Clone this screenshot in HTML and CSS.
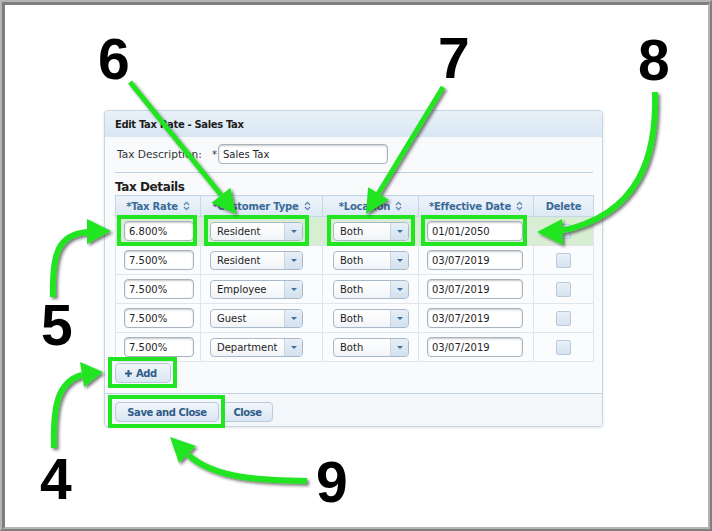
FILE: index.html
```html
<!DOCTYPE html>
<html>
<head>
<meta charset="utf-8">
<title>Edit Tax Rate</title>
<link rel="stylesheet" href="styles.css">
</head>
<body>
<div class="frame">
  <div class="canvas">
    <div class="dialog">
      <div class="dlg-head">Edit Tax Rate - Sales Tax</div>
      <div class="dlg-body">
        <div class="desc-row">
          <span class="label">Tax Description:</span><span class="req">*</span>
          <div class="input desc-input">Sales Tax</div>
        </div>
        <div class="rule"></div>
        <div class="section-title">Tax Details</div>
        <table class="grid">
          <colgroup><col class="w-rate"><col class="w-type"><col class="w-loc"><col class="w-date"><col class="w-del"></colgroup>
          <thead>
            <tr>
              <th>*Tax Rate<svg class="sort" width="7" height="10" viewBox="0 0 7 10"><path d="M1 4 L3.5 1.3 L6 4 M1 6 L3.5 8.7 L6 6"/></svg></th>
              <th>*Customer Type<svg class="sort" width="7" height="10" viewBox="0 0 7 10"><path d="M1 4 L3.5 1.3 L6 4 M1 6 L3.5 8.7 L6 6"/></svg></th>
              <th>*Location<svg class="sort" width="7" height="10" viewBox="0 0 7 10"><path d="M1 4 L3.5 1.3 L6 4 M1 6 L3.5 8.7 L6 6"/></svg></th>
              <th>*Effective Date<svg class="sort" width="7" height="10" viewBox="0 0 7 10"><path d="M1 4 L3.5 1.3 L6 4 M1 6 L3.5 8.7 L6 6"/></svg></th>
              <th>Delete</th>
            </tr>
          </thead>
          <tbody>
            <tr class="sel">
              <td><div class="input rate">6.800%</div></td>
              <td><div class="select type"><span class="val">Resident</span><span class="drop"></span></div></td>
              <td><div class="select loc"><span class="val">Both</span><span class="drop"></span></div></td>
              <td><div class="input date">01/01/2050</div></td>
              <td><div class="chk"></div></td>
            </tr>
            <tr>
              <td><div class="input rate">7.500%</div></td>
              <td><div class="select type"><span class="val">Resident</span><span class="drop"></span></div></td>
              <td><div class="select loc"><span class="val">Both</span><span class="drop"></span></div></td>
              <td><div class="input date">03/07/2019</div></td>
              <td><div class="chk"></div></td>
            </tr>
            <tr>
              <td><div class="input rate">7.500%</div></td>
              <td><div class="select type"><span class="val">Employee</span><span class="drop"></span></div></td>
              <td><div class="select loc"><span class="val">Both</span><span class="drop"></span></div></td>
              <td><div class="input date">03/07/2019</div></td>
              <td><div class="chk"></div></td>
            </tr>
            <tr>
              <td><div class="input rate">7.500%</div></td>
              <td><div class="select type"><span class="val">Guest</span><span class="drop"></span></div></td>
              <td><div class="select loc"><span class="val">Both</span><span class="drop"></span></div></td>
              <td><div class="input date">03/07/2019</div></td>
              <td><div class="chk"></div></td>
            </tr>
            <tr>
              <td><div class="input rate">7.500%</div></td>
              <td><div class="select type"><span class="val">Department</span><span class="drop"></span></div></td>
              <td><div class="select loc"><span class="val">Both</span><span class="drop"></span></div></td>
              <td><div class="input date">03/07/2019</div></td>
              <td><div class="chk"></div></td>
            </tr>
          </tbody>
        </table>
        <div class="add-row">
          <div class="button add"><svg class="plus" width="7" height="7" viewBox="0 0 7 7"><path d="M3.5 0 V7 M0 3.5 H7"/></svg>Add</div>
        </div>
      </div>
      <div class="dlg-foot">
        <div class="button save">Save and Close</div>
        <div class="button close">Close</div>
      </div>
    </div>
  </div>

  <svg class="overlay" width="712" height="531" viewBox="0 0 712 531">
    <defs>
      <filter id="sh" x="-30%" y="-30%" width="160%" height="160%">
        <feDropShadow dx="2" dy="2" stdDeviation="1.6" flood-color="#1a1a1a" flood-opacity="0.6"/>
      </filter>
    </defs>
    <g class="boxes">
      <rect x="119" y="217" width="76" height="27"/>
      <rect x="206" y="217" width="101" height="27"/>
      <rect x="329" y="217" width="84" height="27"/>
      <rect x="423" y="217" width="102" height="27"/>
      <rect x="110" y="359" width="65" height="27"/>
      <rect x="110" y="397" width="113" height="29"/>
    </g>
    <g class="arrows" filter="url(#sh)">
      <path class="shaft" d="M130 82 L221 195"/>
      <polygon points="236,214 211.6,202.8 230.4,187.8"/>
      <path class="shaft" d="M443 87 L378 194"/>
      <polygon points="366,214 368.1,187.3 388.7,199.7"/>
      <path class="shaft thick" d="M655 92 C657 155 640 215 560 231"/>
      <polygon points="537,232 562,219 563,245"/>
      <path class="shaft thick" d="M53 297 C52 255 57 234 88 232"/>
      <polygon points="111,231 87,219 87,244"/>
      <path class="shaft thick" d="M54 448 C53 410 56 382 82 375"/>
      <polygon points="103,372 80,362 84,387"/>
      <path class="shaft thick" d="M307 481 C255 480 215 478 188 455"/>
      <polygon points="170,437 196,446 179,463"/>
    </g>
    <g class="nums">
      <text x="98" y="79">6</text>
      <text x="438" y="78">7</text>
      <text x="638" y="80">8</text>
      <text x="41" y="345">5</text>
      <text x="40" y="499">4</text>
      <text x="316" y="502">9</text>
    </g>
  </svg>
</div>
</body>
</html>
```

FILE: styles.css
```css
* { box-sizing: border-box; }

body {
  margin: 0;
  background: #fff;
  font-family: "DejaVu Sans", sans-serif;
  font-size: 10px;
  color: #222;
}

.frame {
  position: relative;
  width: 712px;
  height: 531px;
  border-style: solid;
  border-width: 2px;
  border-color: #b4b4b4 #7e7e7e #7e7e7e #b4b4b4;
  overflow: hidden;
}

.canvas {
  height: 100%;
  border-style: solid;
  border-width: 3px 2px 2px 3px;
  border-color: #7e7e7e #b4b4b4 #b4b4b4 #7e7e7e;
  background: #fff;
  padding: 105px 0 0 99px;
}

/* dialog */
.dialog {
  width: 499px;
  height: 317px;
  border: 1px solid #c8d6e4;
  border-radius: 4px;
  background: #f8fafc;
  display: flex;
  flex-direction: column;
  box-shadow: 0 1px 3px rgba(0, 0, 0, 0.12);
}

.dlg-head {
  flex: none;
  height: 26px;
  padding: 0 10px;
  display: flex;
  align-items: center;
  background: linear-gradient(#e9f1f9, #d9e7f3);
  border-radius: 3px 3px 0 0;
  font-weight: bold;
  letter-spacing: -0.35px;
  color: #1e1e1e;
}

.dlg-body {
  flex: 1;
  padding: 7px 9px 0 10px;
}

.desc-row {
  display: flex;
  align-items: center;
  height: 20px;
  padding-left: 2px;
}

.label { width: 95px; font-size: 10.6px; color: #333; }
.req { width: 6px; color: #333; }

.input {
  height: 20px;
  border: 1px solid #a9b3bd;
  border-radius: 4px;
  background: #fff;
  box-shadow: inset 0 1px 2px rgba(0, 0, 0, 0.22);
  padding: 0 4px;
  display: flex;
  align-items: center;
  color: #1e1e1e;
}

.desc-input { width: 170px; }

.rule {
  margin-top: 8px;
  border-top: 1px solid #bed0e2;
}

.section-title {
  margin-top: 6px;
  font-size: 12px;
  line-height: 16px;
  font-weight: bold;
  letter-spacing: -0.4px;
  color: #1e1e1e;
}

/* grid */
.grid {
  border-collapse: collapse;
  table-layout: fixed;
  width: 478px;
}

.w-rate { width: 85px; }
.w-type { width: 122px; }
.w-loc { width: 96px; }
.w-date { width: 115px; }
.w-del { width: 60px; }

.grid th {
  height: 21px;
  padding: 0;
  background: linear-gradient(#eef4fa, #dce8f4);
  border: 1px solid #c5d6e7;
  color: #3a6a97;
  font-size: 10px;
  font-weight: bold;
  letter-spacing: -0.2px;
  text-align: center;
  white-space: nowrap;
}

.sort {
  margin-left: 5px;
  vertical-align: -1px;
}
.sort path {
  fill: none;
  stroke: #5a83ab;
  stroke-width: 1.2;
}

.grid td {
  height: 29px;
  padding: 0 0 0 8px;
  border: 1px solid #dfe5eb;
  background: #fbfcfd;
}

.grid tr.sel td { background: #d8eed3; }

.grid td:nth-child(2) { padding-left: 9px; }
.grid td:nth-child(3) { padding-left: 10px; }
.grid td:nth-child(5) { padding-left: 0; }

.rate { width: 70px; }
.date { width: 96px; }

.select {
  height: 19px;
  display: flex;
  border: 1px solid #aab9c9;
  border-radius: 4px;
  background: linear-gradient(#fff, #f1f4f7);
  overflow: hidden;
  color: #1e1e1e;
}
.select.type { width: 93px; }
.select.loc { width: 76px; }

.select .val {
  flex: 1;
  padding-left: 6px;
  display: flex;
  align-items: center;
}

.select .drop {
  width: 18px;
  flex: none;
  display: flex;
  align-items: center;
  justify-content: center;
  background: linear-gradient(#e7eff7, #d3e1ee);
  border-left: 1px solid #c7d5e3;
}
.select .drop::after {
  content: "";
  border-left: 3px solid transparent;
  border-right: 3px solid transparent;
  border-top: 3px solid #3f6f9f;
}

.chk {
  width: 15px;
  height: 15px;
  margin: 0 auto;
  border: 1px solid #b8cadc;
  border-radius: 2px;
  background: linear-gradient(#e9f0f7, #d6e3ef);
}

/* buttons */
.add-row { margin-top: 1px; display: flex; }

.button {
  height: 20px;
  display: flex;
  align-items: center;
  padding: 0 10px;
  border: 1px solid #b7cadd;
  border-radius: 4px;
  background: linear-gradient(#f1f6fb, #d9e6f2);
  color: #2f5c88;
  font-size: 10px;
  font-weight: bold;
  letter-spacing: -0.45px;
}

.button.add { width: 56px; padding-left: 9px; }
.plus { margin-right: 4px; }
.plus path { stroke: #2f5c88; stroke-width: 2; fill: none; }

.button.save { width: 104px; justify-content: center; padding: 0; }
.button.close { width: 51px; justify-content: center; padding: 0; margin-left: 3px; }

.dlg-foot {
  flex: none;
  height: 33px;
  display: flex;
  align-items: flex-start;
  padding: 8px 10px 0;
  border-top: 1px solid #c3d4e5;
  background: #f4f7fa;
  border-radius: 0 0 3px 3px;
}

/* annotations */
.overlay {
  position: absolute;
  left: -2px;
  top: -2px;
}

.boxes rect {
  fill: none;
  stroke: #22e522;
  stroke-width: 4;
}

.arrows polygon { fill: #22e522; }
.arrows .shaft {
  fill: none;
  stroke: #22e522;
  stroke-width: 5;
}
.arrows .thick { stroke-width: 6; }

.nums text {
  font-family: "Liberation Sans", Arial, sans-serif;
  font-weight: bold;
  font-size: 57px;
  fill: #000;
}
```
